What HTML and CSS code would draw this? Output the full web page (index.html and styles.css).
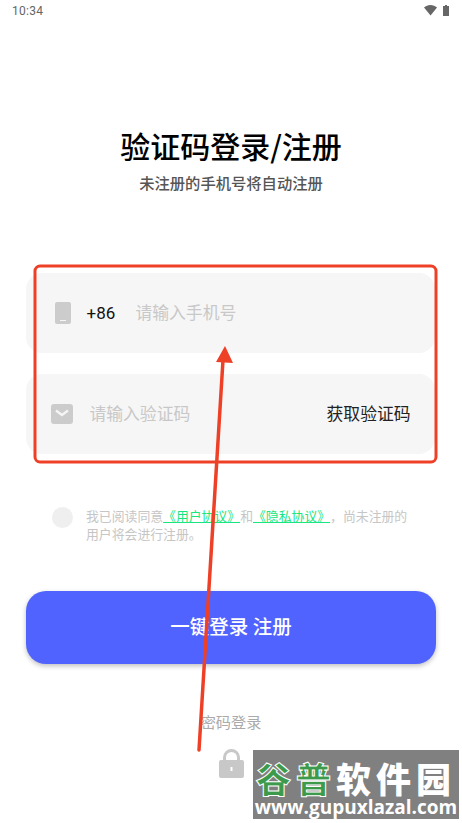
FILE: index.html
```html
<!DOCTYPE html>
<html lang="zh-CN">
<head>
<meta charset="utf-8">
<title>验证码登录/注册</title>
<link rel="stylesheet" href="styles.css">
</head>
<body>
<main class="page">
  <header class="status">
    <span class="time">10:34</span>
    <span class="status-icons">
      <svg width="13" height="11" viewBox="0 0 13 11"><path class="si" d="M0 2.6C1.8 1 4 0 6.5 0S11.2 1 13 2.6L6.5 10.5Z"/></svg>
      <svg width="6" height="11" viewBox="0 0 6 11"><path class="si" d="M2 0H4V1H6V11H0V1H2Z"/></svg>
    </span>
  </header>
  <section class="heading">
    <h1 class="title">验证码登录/注册</h1>
    <p class="subtitle">未注册的手机号将自动注册</p>
  </section>
  <section class="fields">
    <div class="field field-phone">
      <svg class="ic-phone" width="16" height="22" viewBox="0 0 16 22"><rect class="ic" width="16" height="22" rx="2"/><rect x="5" y="18" width="6" height="1" fill="#f6f6f6"/></svg>
      <span class="code">+86</span>
      <span class="placeholder">请输入手机号</span>
    </div>
    <div class="field field-code">
      <svg class="ic-mail" width="22" height="20" viewBox="0 0 22 20"><rect class="ic" width="22" height="20" rx="3"/><path d="M5 6.5L11 11L17 6.5" fill="none" stroke="#f6f6f6" stroke-width="2.2"/></svg>
      <span class="placeholder">请输入验证码</span>
      <span class="get-code">获取验证码</span>
    </div>
  </section>
  <section class="agree">
    <span class="radio"></span>
    <p class="agree-text">我已阅读同意<a class="link">《用户协议》</a>和<a class="link">《隐私协议》</a>，尚未注册的<br>用户将会进行注册。</p>
  </section>
  <button class="submit">一键登录 注册</button>
  <div class="pwd">密码登录</div>
  <svg class="lock" width="25" height="29" viewBox="0 0 25 29"><path class="lock-body" fill-rule="evenodd" d="M2 11H4V8.500A8.500 8.500 0 0 1 21 8.500V11H23A2 2 0 0 1 25 13V27A2 2 0 0 1 23 29H2A2 2 0 0 1 0 27V13A2 2 0 0 1 2 11ZM7 11H18V8.500A5.500 5.500 0 0 0 7 8.500ZM11.500 18V22H13.500V18Z"/></svg>
</main>
<svg class="annot" width="462" height="823" viewBox="0 0 462 823">
  <rect x="35" y="266" width="401" height="196" rx="5" fill="none" stroke="#ee4026" stroke-width="3"/>
  <path d="M199 750L223 360" stroke="#ee4026" stroke-width="3.500" stroke-linecap="round" fill="none"/>
  <path d="M225 346L216 362L233 363Z" fill="#ee4026"/>
</svg>
<aside class="mark">
  <div class="mark-top"><span class="mark-green">谷普</span><span class="mark-white">软件园</span></div>
  <div class="mark-url">www.gupuxlazal.com</div>
</aside>
</body>
</html>
```
FILE: styles.css
```css
* { box-sizing: border-box; }
html, body { margin: 0; padding: 0; background: #fff; }
body {
  width: 462px;
  height: 823px;
  overflow: hidden;
  position: relative;
  font-family: "Noto Sans CJK SC", "Noto Sans", sans-serif;
  text-spacing-trim: space-all;
}
.page { display: flex; flex-direction: column; align-items: center; }
.status {
  width: 100%;
  height: 21px;
  padding: 0 13px 0 12px;
  display: flex;
  align-items: center;
  justify-content: space-between;
}
.time { font: 12px/20px Roboto, sans-serif; color: #666; letter-spacing: .3px; }
.status-icons { display: flex; gap: 6px; align-items: center; }
.si { fill: #666; }
.heading { margin-top: 104px; display: flex; flex-direction: column; align-items: center; }
.title { margin: 0; font-size: 30px; line-height: 40px; font-weight: 500; color: #000; }
.subtitle { margin: 6px 0 0; font-size: 15.300px; line-height: 22px; font-weight: 500; color: #555; }
.fields {
  margin-top: 80px;
  width: 409px;
  margin-right: 2px;
  display: flex;
  flex-direction: column;
  gap: 21px;
}
.field {
  height: 80px;
  border-radius: 16px;
  background: #f6f6f6;
  display: flex;
  align-items: center;
  font-size: 16.800px;
}
.ic { fill: #ccc; }
.field-phone { padding-left: 29px; }
.ic-phone { flex: none; }
.code { margin-left: 16px; width: 49px; font: 17px/24px Roboto, sans-serif; color: #111; }
.placeholder { color: #c8c8c8; padding-bottom: 2px; }
.field-code { padding-left: 25px; padding-right: 24px; }
.ic-mail { flex: none; margin-right: 17px; }
.get-code { margin-left: auto; color: #222; padding-bottom: 2px; }
.agree {
  margin-top: 53px;
  width: 100%;
  padding: 0 30px 0 52px;
  display: flex;
  align-items: flex-start;
}
.radio { flex: none; width: 21px; height: 21px; border-radius: 50%; background: #efefef; }
.agree-text { margin: 0 0 0 13px; font-size: 12.850px; line-height: 18px; color: #c6c6c6; }
.link { color: #19e67f; text-decoration: underline; }
.submit {
  margin: 48px 0 0 0;
  width: 410px;
  height: 73px;
  padding: 0 0 4px;
  border: 0;
  border-radius: 20px;
  background: #5163ff;
  color: #fff;
  font-family: inherit;
  font-size: 19.500px;
  font-weight: 500;
  box-shadow: 0 2px 5px rgba(0, 0, 0, .25);
}
.pwd { margin-top: 46px; font-size: 15.200px; line-height: 22px; color: #aaa; }
.lock { margin-top: 17px; margin-left: 1px; }
.lock-body { fill: #c8c8c8; }
.annot { position: absolute; left: 0; top: 0; pointer-events: none; }
.mark {
  position: absolute;
  left: 253px;
  top: 750px;
  width: 206px;
  height: 69px;
  background: #808080;
  overflow: hidden;
}
.mark-top { display: flex; justify-content: center; height: 46px; padding-top: 10px; align-items: center; font-size: 35px; line-height: 36px; font-weight: 900; letter-spacing: 5px; white-space: nowrap; }
.mark-green { color: #3d9a4c; -webkit-text-stroke: 1px #fff; }
.mark-white { color: #fff; }
.mark-url { font: 700 19px/22px "Open Sans", sans-serif; color: #fff; text-align: center; white-space: nowrap; }
```
